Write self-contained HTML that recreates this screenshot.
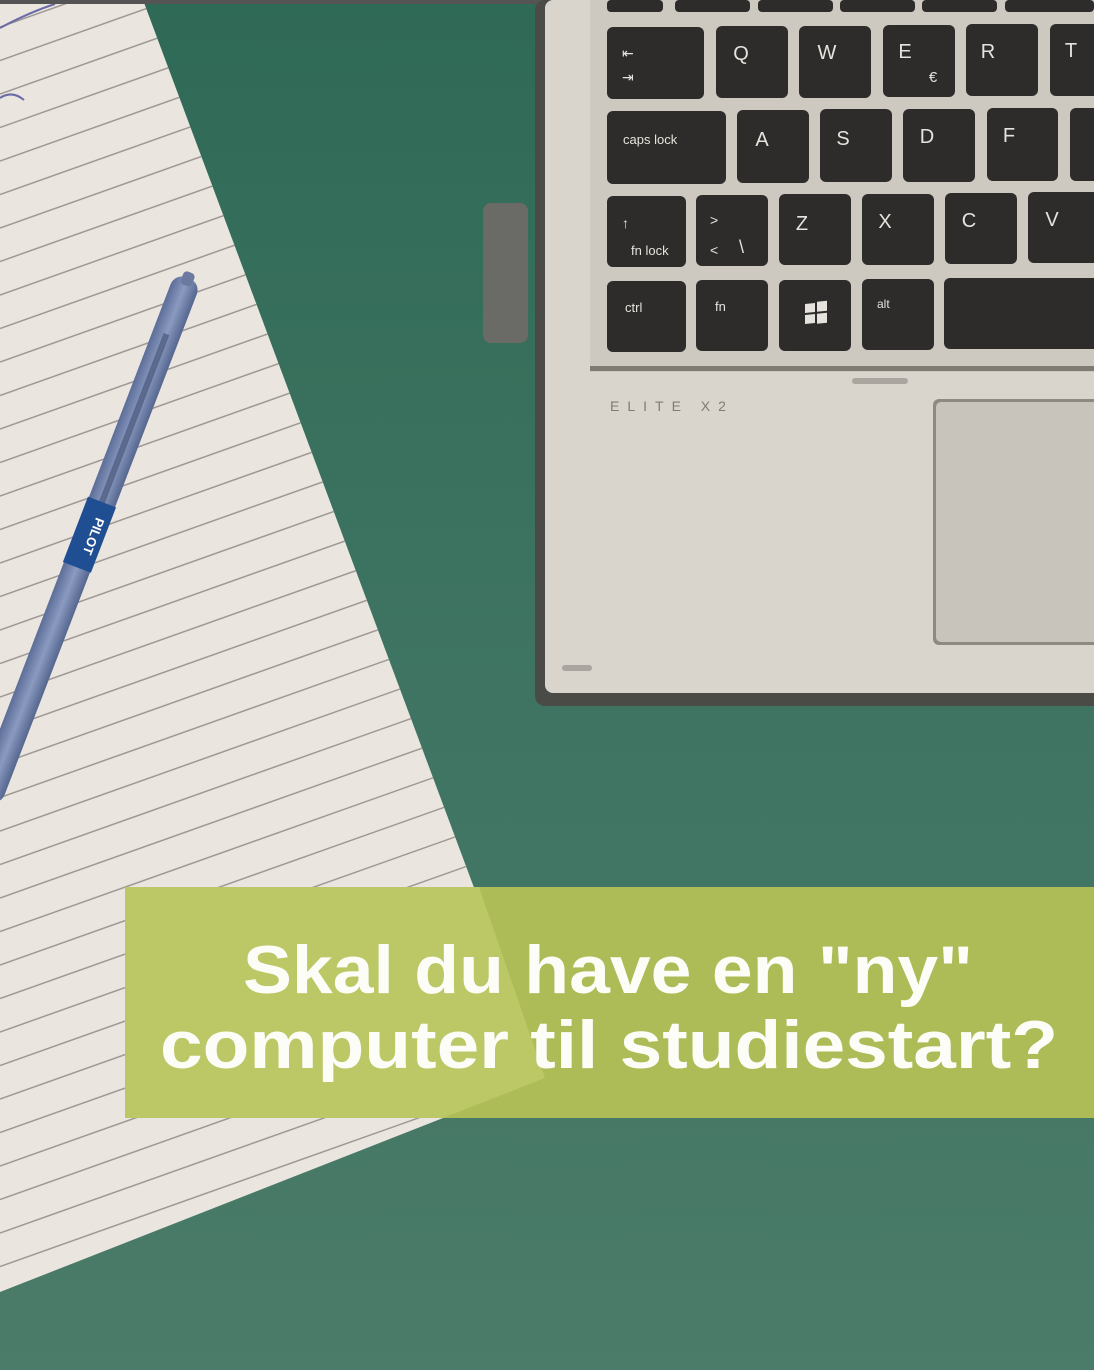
<!DOCTYPE html>
<html><head><meta charset="utf-8"><style>
html,body{margin:0;padding:0;}
body{width:1094px;height:1370px;overflow:hidden;}
svg{display:block;}
</style></head><body>
<svg width="1094" height="1370" viewBox="0 0 1094 1370" xmlns="http://www.w3.org/2000/svg">
<defs>
<linearGradient id="bg" x1="0" y1="0" x2="0" y2="1">
<stop offset="0" stop-color="#2f6a56"/><stop offset="0.5" stop-color="#3f7462"/><stop offset="1" stop-color="#4b7b69"/>
</linearGradient>
<clipPath id="paper"><polygon points="0,0 143,0 545,1078 0,1292"/></clipPath>
<linearGradient id="pen" x1="0" y1="0" x2="1" y2="0">
<stop offset="0" stop-color="#5c6d98"/><stop offset="0.5" stop-color="#8a9ac0"/><stop offset="1" stop-color="#55668f"/>
</linearGradient>
</defs>
<rect width="1094" height="1370" fill="url(#bg)"/>
<!-- paper -->
<polygon points="0,0 143,0 545,1078 0,1292" fill="#ebe5df"/>
<g clip-path="url(#paper)" stroke="#9d9894" stroke-width="1.6">
<script></script>
</g>
<g clip-path="url(#paper)" stroke="#9e9995" stroke-width="1.5" id="lines"></g>
<path d="M0,28 Q30,12 55,4" stroke="#6a6aa8" stroke-width="2" fill="none"/>
<path d="M0,98 Q12,90 24,100" stroke="#6a6aa8" stroke-width="2" fill="none"/>
<!-- pen -->
<g transform="translate(188,278) rotate(21)">
<rect x="-14" y="0" width="28" height="560" rx="12" fill="url(#pen)"/>
<rect x="-6" y="-6" width="12" height="14" rx="4" fill="#6c7aa0"/>
<rect x="-3" y="60" width="6" height="200" fill="#3e4b6e" opacity="0.6"/>
<rect x="-15" y="240" width="30" height="70" fill="#1f4f92"/>
<text x="0" y="275" fill="#fff" font-family="Liberation Sans, sans-serif" font-weight="bold" font-size="13" text-anchor="middle" transform="rotate(90 0 275)">PILOT</text>
</g>
<!-- top bar -->
<rect x="0" y="0" width="1094" height="4" fill="#545454"/>
<!-- pen holder -->
<rect x="483" y="203" width="45" height="140" rx="8" fill="#6a6a67"/>
<!-- laptop -->
<rect x="535" y="0" width="570" height="706" rx="10" fill="#4a4a47"/>
<rect x="545" y="0" width="560" height="693" rx="8" fill="#d9d5cc"/>
<rect x="590" y="0" width="520" height="372" fill="#cdc9c1"/>
<rect x="590" y="366" width="520" height="5" fill="#7e7a74"/>
<rect x="852" y="378" width="56" height="6" rx="3" fill="#aaa69f"/>
<rect x="562" y="665" width="30" height="6" rx="3" fill="#aaa69f"/>
<rect x="933" y="399" width="170" height="246" rx="6" fill="#8d8a84"/>
<rect x="936" y="402" width="170" height="240" rx="5" fill="#c8c4bc"/>
<text x="610" y="411" fill="#807c76" font-family="Liberation Sans, sans-serif" font-size="14" letter-spacing="8">ELITE X2</text>
<g fill="#2e2c2a">
<rect x="607" y="0" width="56" height="12" rx="4"/><rect x="675" y="0" width="75" height="12" rx="4"/><rect x="758" y="0" width="75" height="12" rx="4"/><rect x="840" y="0" width="75" height="12" rx="4"/><rect x="922" y="0" width="75" height="12" rx="4"/><rect x="1005" y="0" width="89" height="12" rx="4"/>
<rect x="607" y="27" width="97" height="72" rx="6"/><rect x="716" y="26" width="72" height="72" rx="6"/><rect x="799" y="26" width="72" height="72" rx="6"/><rect x="883" y="25" width="72" height="72" rx="6"/><rect x="966" y="24" width="72" height="72" rx="6"/><rect x="1050" y="24" width="60" height="72" rx="6"/>
<rect x="607" y="111" width="119" height="73" rx="6"/><rect x="737" y="110" width="72" height="73" rx="6"/><rect x="820" y="109" width="72" height="73" rx="6"/><rect x="903" y="109" width="72" height="73" rx="6"/><rect x="987" y="108" width="71" height="73" rx="6"/><rect x="1070" y="108" width="40" height="73" rx="6"/>
<rect x="607" y="196" width="79" height="71" rx="6"/><rect x="696" y="195" width="72" height="71" rx="6"/><rect x="779" y="194" width="72" height="71" rx="6"/><rect x="862" y="194" width="72" height="71" rx="6"/><rect x="945" y="193" width="72" height="71" rx="6"/><rect x="1028" y="192" width="80" height="71" rx="6"/>
<rect x="607" y="281" width="79" height="71" rx="6"/><rect x="696" y="280" width="72" height="71" rx="6"/><rect x="779" y="280" width="72" height="71" rx="6"/><rect x="862" y="279" width="72" height="71" rx="6"/><rect x="944" y="278" width="160" height="71" rx="6"/>
</g>
<g fill="#e6e3de" font-family="Liberation Sans, sans-serif">
<g font-size="20" text-anchor="middle">
<text x="741" y="60">Q</text><text x="827" y="59">W</text><text x="905" y="58">E</text><text x="988" y="58">R</text><text x="1071" y="57">T</text>
<text x="762" y="146">A</text><text x="843" y="145">S</text><text x="927" y="143">D</text><text x="1009" y="142">F</text>
<text x="802" y="230">Z</text><text x="885" y="228">X</text><text x="969" y="227">C</text><text x="1052" y="226">V</text>
</g>
<text x="933" y="82" font-size="15" text-anchor="middle">€</text>
<text x="622" y="58" font-size="14">⇤</text><text x="622" y="82" font-size="14">⇥</text>
<text x="623" y="144" font-size="13">caps lock</text>
<text x="622" y="228" font-size="14">↑</text><text x="631" y="255" font-size="13">fn lock</text>
<text x="710" y="225" font-size="14">&gt;</text><text x="710" y="255" font-size="14">&lt;</text><text x="739" y="253" font-size="18">\</text>
<text x="625" y="312" font-size="13">ctrl</text><text x="715" y="311" font-size="13">fn</text><text x="877" y="308" font-size="12">alt</text>
<g transform="translate(805,304) skewY(-6)"><rect x="0" y="0" width="10" height="9"/><rect x="12" y="-1" width="10" height="10"/><rect x="0" y="11" width="10" height="9"/><rect x="12" y="11" width="10" height="10"/></g>
</g>
<!-- banner -->
<rect x="125" y="887" width="969" height="231" fill="#aebc57"/>
<polygon points="125,887 479,887 545,1078 443,1118 125,1118" fill="#bcc765"/>
<g fill="#fdfdf8" font-family="Liberation Sans, sans-serif" font-weight="bold" font-size="68">
<text x="243" y="993" textLength="730" lengthAdjust="spacingAndGlyphs">Skal du have en "ny"</text>
<text x="160" y="1068" textLength="898" lengthAdjust="spacingAndGlyphs">computer til studiestart?</text>
</g>
</svg>
<script>
(function(){var g=document.getElementById('lines');var ns='http://www.w3.org/2000/svg';
for(var c=-40;c<1300;c+=33.5){var l=document.createElementNS(ns,'line');l.setAttribute('x1',0);l.setAttribute('y1',c);l.setAttribute('x2',600);l.setAttribute('y2',c-600*0.355);g.appendChild(l);}
})();
</script>
</body></html>
